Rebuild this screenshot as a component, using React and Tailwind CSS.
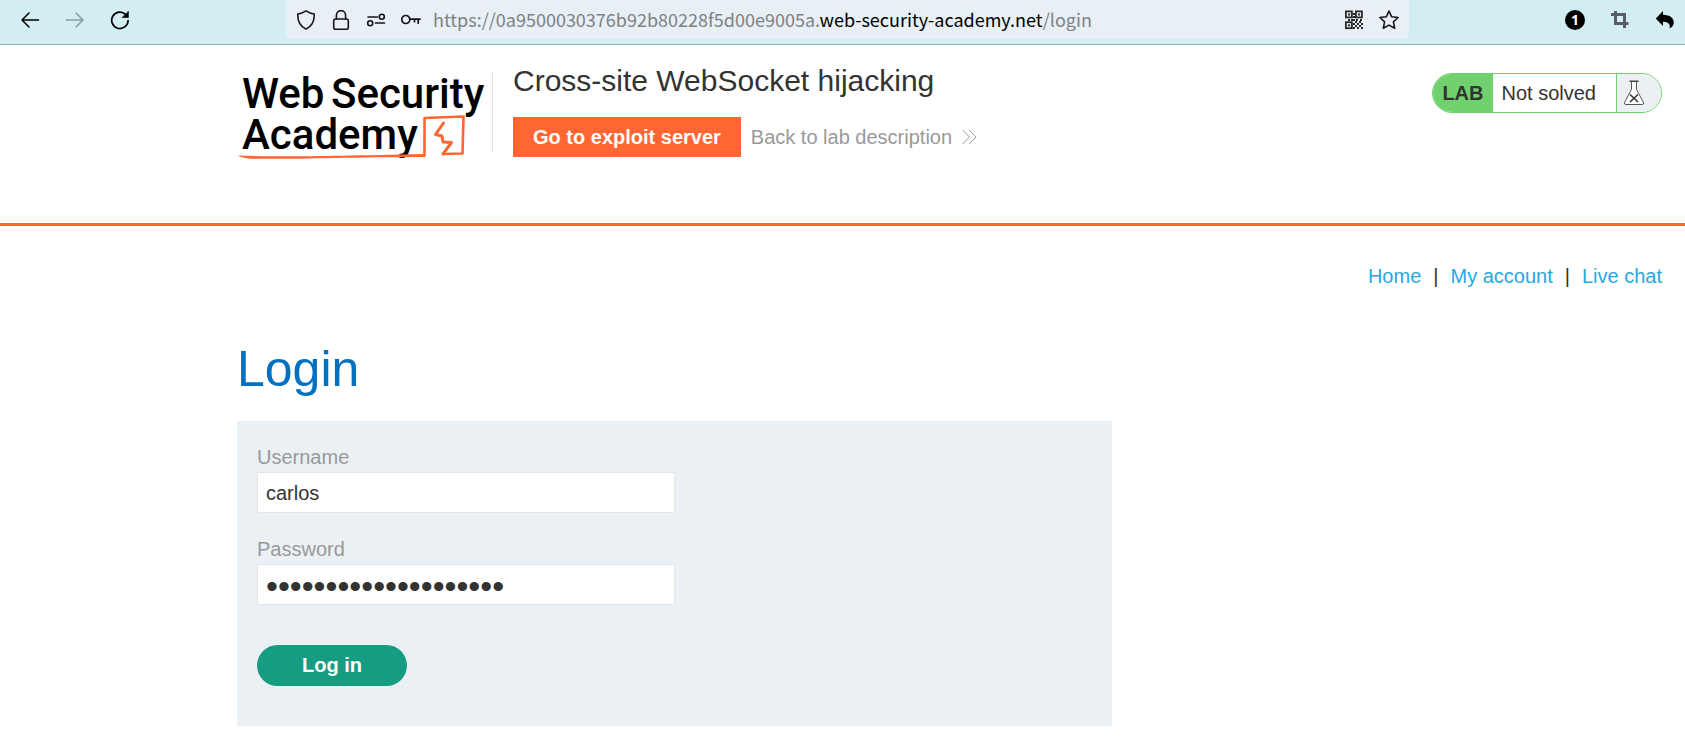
import React from "react";

const iconProps = {
  viewBox: "0 0 20 20",
  className: "size-5 shrink-0",
  fill: "none",
  stroke: "currentColor",
  strokeWidth: 1.5,
  strokeLinecap: "round",
  strokeLinejoin: "round",
  "aria-hidden": true,
};

const QR_CELLS = [
  [9, 3], [9, 6], [4, 9], [7, 9], [9, 9], [12, 9], [16, 9],
  [11, 11], [15, 11], [13, 13], [17, 13], [11, 15], [15, 15], [13, 17], [17, 17],
  [9, 13], [9, 17],
];

function IconButton({ label, className = "", children }) {
  return (
    <button type="button" aria-label={label} className={`block shrink-0 ${className}`}>
      {children}
    </button>
  );
}

function BrowserBar() {
  return (
    <div className="flex h-[45px] items-start border-b border-[#93abae] bg-[#d2eef2] text-black">
      <div className="flex h-[39px] items-center gap-[25px] pl-5">
        <IconButton label="Back">
          <svg {...iconProps}>
            <path d="M18.5 10H2M9 3L2 10l7 7" />
          </svg>
        </IconButton>
        <IconButton label="Forward" className="text-[#8a9c9f]">
          <svg {...iconProps}>
            <path d="M1.500 10H18M11 3l7 7-7 7" />
          </svg>
        </IconButton>
        <IconButton label="Reload">
          <svg {...iconProps} strokeWidth="1.7">
            <path d="M18.100 10.500A8.200 8.200 0 1 1 15.600 4.400" />
            <path d="M18.400 1.500v6h-6z" fill="currentColor" strokeWidth="0.6" />
          </svg>
        </IconButton>
      </div>

      <div className="mx-[156px] flex h-[39px] min-w-0 flex-1 items-center gap-[15px] rounded-b-[5px] bg-[#e8eff5] px-2.5 text-[#15141a]">
        <IconButton label="Tracking protection">
          <svg {...iconProps} strokeWidth="1.6">
            <path d="M10 .9c2.600 1.700 5.200 2.700 8.200 3.100.3 6.300-2.500 12.300-8.200 15.100C4.300 16.300 1.500 10.300 1.800 4 4.800 3.600 7.400 2.600 10 .9z" />
          </svg>
        </IconButton>
        <IconButton label="Site security">
          <svg {...iconProps} strokeWidth="1.6">
            <rect x="2.700" y="9" width="14.600" height="10.200" rx="2" />
            <path d="M5.400 9V5.200a4.600 4.600 0 0 1 9.200 0V9" />
          </svg>
        </IconButton>
        <IconButton label="Permissions">
          <svg {...iconProps} strokeWidth="1.6">
            <path d="M2 7h9.500M9.500 13H18.500" />
            <circle cx="15.800" cy="6.800" r="2.500" />
            <circle cx="4.200" cy="13.200" r="2.500" />
          </svg>
        </IconButton>
        <div className="flex min-w-0 flex-1 items-center gap-3">
          <IconButton label="Saved passwords">
            <svg {...iconProps} strokeWidth="1.700">
              <circle cx="4.800" cy="9.500" r="4" />
              <path d="M9 9.200h10M17.200 9.200v4M13.500 9.200v2.500" />
            </svg>
          </IconButton>
          <p className="truncate pb-0.5 font-['Noto_Sans_CJK_SC','Open_Sans',sans-serif] text-[18px] leading-6 text-[#7d8286]">
            https://0a9500030376b92b80228f5d00e9005a.
            <span className="text-black">web-security-academy.net</span>/login
          </p>
        </div>
        <IconButton label="QR code">
          <svg viewBox="0 0 20 20" className="size-5" aria-hidden="true">
            <g fill="none" stroke="#2a2a2c" strokeWidth="1.800">
              <rect x="1.900" y="1.400" width="6" height="6" />
              <rect x="11.900" y="1.400" width="6" height="6" />
              <rect x="1.900" y="12.200" width="6" height="6" />
            </g>
            <g fill="#2a2a2c">
              <rect x="4" y="3.500" width="2" height="2" />
              <rect x="14" y="3.500" width="2" height="2" />
              <rect x="4" y="14.300" width="2" height="2" />
              {QR_CELLS.map(([x, y]) => (
                <rect key={`${x}-${y}`} x={x} y={y} width="2" height="2" />
              ))}
            </g>
          </svg>
        </IconButton>
        <IconButton label="Bookmark">
          <svg {...iconProps} strokeWidth="1.600">
            <path d="M10 1l2.700 5.800 6.400.7-4.700 4.300 1.300 6.400L10 15.100 4.300 18.200l1.300-6.400L.9 7.500l6.400-.7z" />
          </svg>
        </IconButton>
      </div>

      <div className="flex h-[39px] items-center gap-[25px] pr-2.5">
        <IconButton label="Notifications">
          <span className="flex size-5 items-center justify-center rounded-full bg-black font-['Open_Sans',sans-serif] text-sm font-bold text-white">
            1
          </span>
        </IconButton>
        <IconButton label="Capture" className="text-[#5b5b66]">
          <svg {...iconProps} strokeWidth="3" strokeLinecap="butt" strokeLinejoin="miter">
            <path d="M1 4.500h13.500v13.500M5.500 1v12.500H18.500" />
          </svg>
        </IconButton>
        <IconButton label="Undo">
          <svg viewBox="0 0 20 20" className="size-5" aria-hidden="true">
            <path d="M8 1v3.800c7 .2 10.800 3.200 10.800 7.700 0 2.500-1.500 4.500-4.200 6C15.400 14.800 14 12 8 11.800V16L.8 8.400z" />
          </svg>
        </IconButton>
      </div>
    </div>
  );
}

function Logo() {
  return (
    <a href="#academy" aria-label="Web Security Academy" className="block shrink-0">
      <svg viewBox="0 0 255 94" className="h-[94px] w-[255px]">
        <text fontSize="42" fontFamily="Roboto, sans-serif" fontWeight="500">
          <tspan x="5" y="39">Web</tspan>
          <tspan x="94" y="39">Security</tspan>
          <tspan x="5" y="80">Academy</tspan>
        </text>
        <g fill="none" stroke="#ff6633" strokeLinejoin="round" strokeLinecap="round">
          <path d="M187.500 86.500V49L226.500 47.500L225.500 84.500L206 85" strokeWidth="2.600" />
          <path d="M206.500 54L198.500 65.500L205 67L206 73L214.500 73.500L206 85" strokeWidth="3" />
        </g>
        <path d="M1 86.500c40 1.700 90 .5 187-1.500v2.900c-80 .2-130 2.500-175 1.800-5-.4-9-1.500-12-3.200z" fill="#ff6633" />
      </svg>
    </a>
  );
}

function LabStatus() {
  return (
    <div className="flex h-10 items-stretch overflow-hidden rounded-full border border-[#70d16e] bg-white leading-[38px]">
      <strong className="bg-[#70d16e] px-[9px] font-bold">LAB</strong>
      <p className="pr-5 pl-[9px]">Not solved</p>
      <span className="flex w-[45px] items-center border-l border-[#70d16e] bg-[#eaf0f3] pl-1.5">
        <svg viewBox="0 0 22 26" className="h-[26px] w-[22px]" aria-hidden="true">
          <path d="M8.500 1.500v8L1.500 22.500q-.7 2 1.500 2h16q2.200 0 1.500-2l-7-13v-8z" fill="#fff" stroke="#555" />
          <path d="M6.500 1.300h9" stroke="#444" strokeWidth="1.400" />
          <path d="M7 14.500l8 7.500M15 14.500L7 22" stroke="#333" strokeWidth="1.600" />
        </svg>
      </span>
    </div>
  );
}

function LabHeader() {
  return (
    <header className="border-b-[3px] border-[#ff6633] pt-6 pr-[23px] pb-[60px] pl-[237px]">
      <div className="flex items-start">
        <Logo />
        <div className="mt-1 mr-5 h-[78px] w-px bg-[#e0e0e0]" />
        <div className="flex-1">
          <h2 className="pb-6 text-[30px] leading-6">Cross-site WebSocket hijacking</h2>
          <div className="flex items-center gap-2.5">
            <button type="button" className="h-10 bg-[#ff6633] px-5 font-bold text-white">
              Go to exploit server
            </button>
            <a href="#description" className="flex items-center gap-2.5 text-[#999]">
              Back to lab description
              <svg viewBox="0 0 15 16" className="h-4 w-[15px]" fill="none" stroke="currentColor" aria-hidden="true">
                <path d="M.5.800L7.500 8l-7 7.200M7 .800L14 8l-7 7.200" />
              </svg>
            </a>
          </div>
        </div>
        <div className="mt-1">
          <LabStatus />
        </div>
      </div>
    </header>
  );
}

export default function App() {
  return (
    <div className="min-h-screen bg-white font-['Liberation_Sans',Arial,sans-serif] text-xl leading-6 text-[#333332]">
      <BrowserBar />
      <LabHeader />
      <main className="pr-[23px] pl-[237px]">
        <nav className="flex justify-end gap-3 pt-[38px] text-[#29a8df]">
          <a href="#home">Home</a>
          <span className="text-[#333332]">|</span>
          <a href="#account">My account</a>
          <span className="text-[#333332]">|</span>
          <a href="#chat">Live chat</a>
        </nav>
        <h1 className="pt-[51px] text-[50px] leading-[60px] text-[#0071c1]">Login</h1>
        <form
          className="mt-[22px] max-w-[875px] bg-[#eaf0f3] px-5 pt-6 pb-10"
          onSubmit={(e) => e.preventDefault()}
        >
          <label htmlFor="username" className="block text-[#999]">Username</label>
          <input
            id="username"
            type="text"
            defaultValue="carlos"
            className="mt-[3px] mb-6 block h-[41px] w-1/2 border border-[#e4e6e6] bg-white px-2 pt-0.5 outline-none"
          />
          <label htmlFor="password" className="block text-[#999]">Password</label>
          <input
            id="password"
            type="password"
            defaultValue="abcdefghij0123456789"
            className="mt-[3px] mb-10 block h-[41px] w-1/2 border border-[#e4e6e6] bg-white px-2 pt-1 text-[34px] outline-none"
          />
          <button type="submit" className="block h-[41px] w-[150px] rounded-full bg-[#169c80] pb-0.5 font-bold text-white">
            Log in
          </button>
        </form>
      </main>
    </div>
  );
}
